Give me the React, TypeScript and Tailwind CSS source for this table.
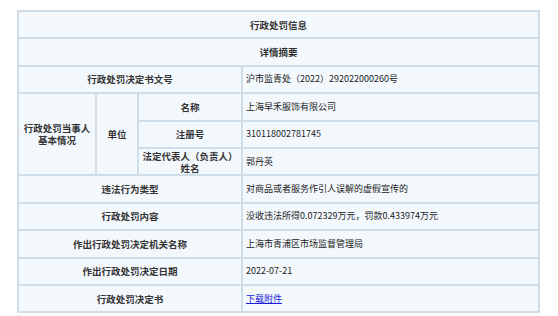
const rows = [
  { label: "违法行为类型", value: "对商品或者服务作引人误解的虚假宣传的" },
  { label: "行政处罚内容", value: "没收违法所得0.072329万元，罚款0.433974万元" },
  { label: "作出行政处罚决定机关名称", value: "上海市青浦区市场监督管理局" },
  { label: "作出行政处罚决定日期", value: "2022-07-21" },
];

export default function App() {
  const cell = "border border-[#cfdde8] bg-[#f3f8fd] h-[27.4px] p-0";
  const label = cell + " text-center font-bold text-[9.5px] text-[#333]";
  const value = cell + " text-left pl-[3px] text-[9px] text-[#222]";

  return (
    <div
      className="w-[558px] h-[316px] bg-white pt-[10px] pl-[17px]"
      style={{ fontFamily: '"Noto Sans CJK SC", "Noto Sans", sans-serif' }}
    >
      <table className="w-[523px] table-fixed border-separate border-spacing-0 border border-[#cfdde8] leading-[12px]">
        <colgroup>
          <col className="w-[78px]" />
          <col className="w-[42px]" />
          <col className="w-[104px]" />
          <col className="w-[297px]" />
        </colgroup>
        <tbody>
          <tr>
            <td colSpan={4} className={label}>行政处罚信息</td>
          </tr>
          <tr>
            <td colSpan={4} className={label}>详情摘要</td>
          </tr>
          <tr>
            <td colSpan={3} className={label}>行政处罚决定书文号</td>
            <td className={value}>沪市监青处（2022）292022000260号</td>
          </tr>
          <tr>
            <td rowSpan={3} className={label}>
              行政处罚当事人
              <br />
              基本情况
            </td>
            <td rowSpan={3} className={label}>单位</td>
            <td className={label}>名称</td>
            <td className={value}>上海早禾服饰有限公司</td>
          </tr>
          <tr>
            <td className={label}>注册号</td>
            <td className={value}>310118002781745</td>
          </tr>
          <tr>
            <td className={label}>
              法定代表人（负责人）
              <br />
              姓名
            </td>
            <td className={value}>郭丹英</td>
          </tr>
          {rows.map((r) => (
            <tr key={r.label}>
              <td colSpan={3} className={label}>{r.label}</td>
              <td className={value}>{r.value}</td>
            </tr>
          ))}
          <tr>
            <td colSpan={3} className={label}>行政处罚决定书</td>
            <td className={value}>
              <a href="#" className="text-[#1a1adb] underline">下载附件</a>
            </td>
          </tr>
        </tbody>
      </table>
    </div>
  );
}
